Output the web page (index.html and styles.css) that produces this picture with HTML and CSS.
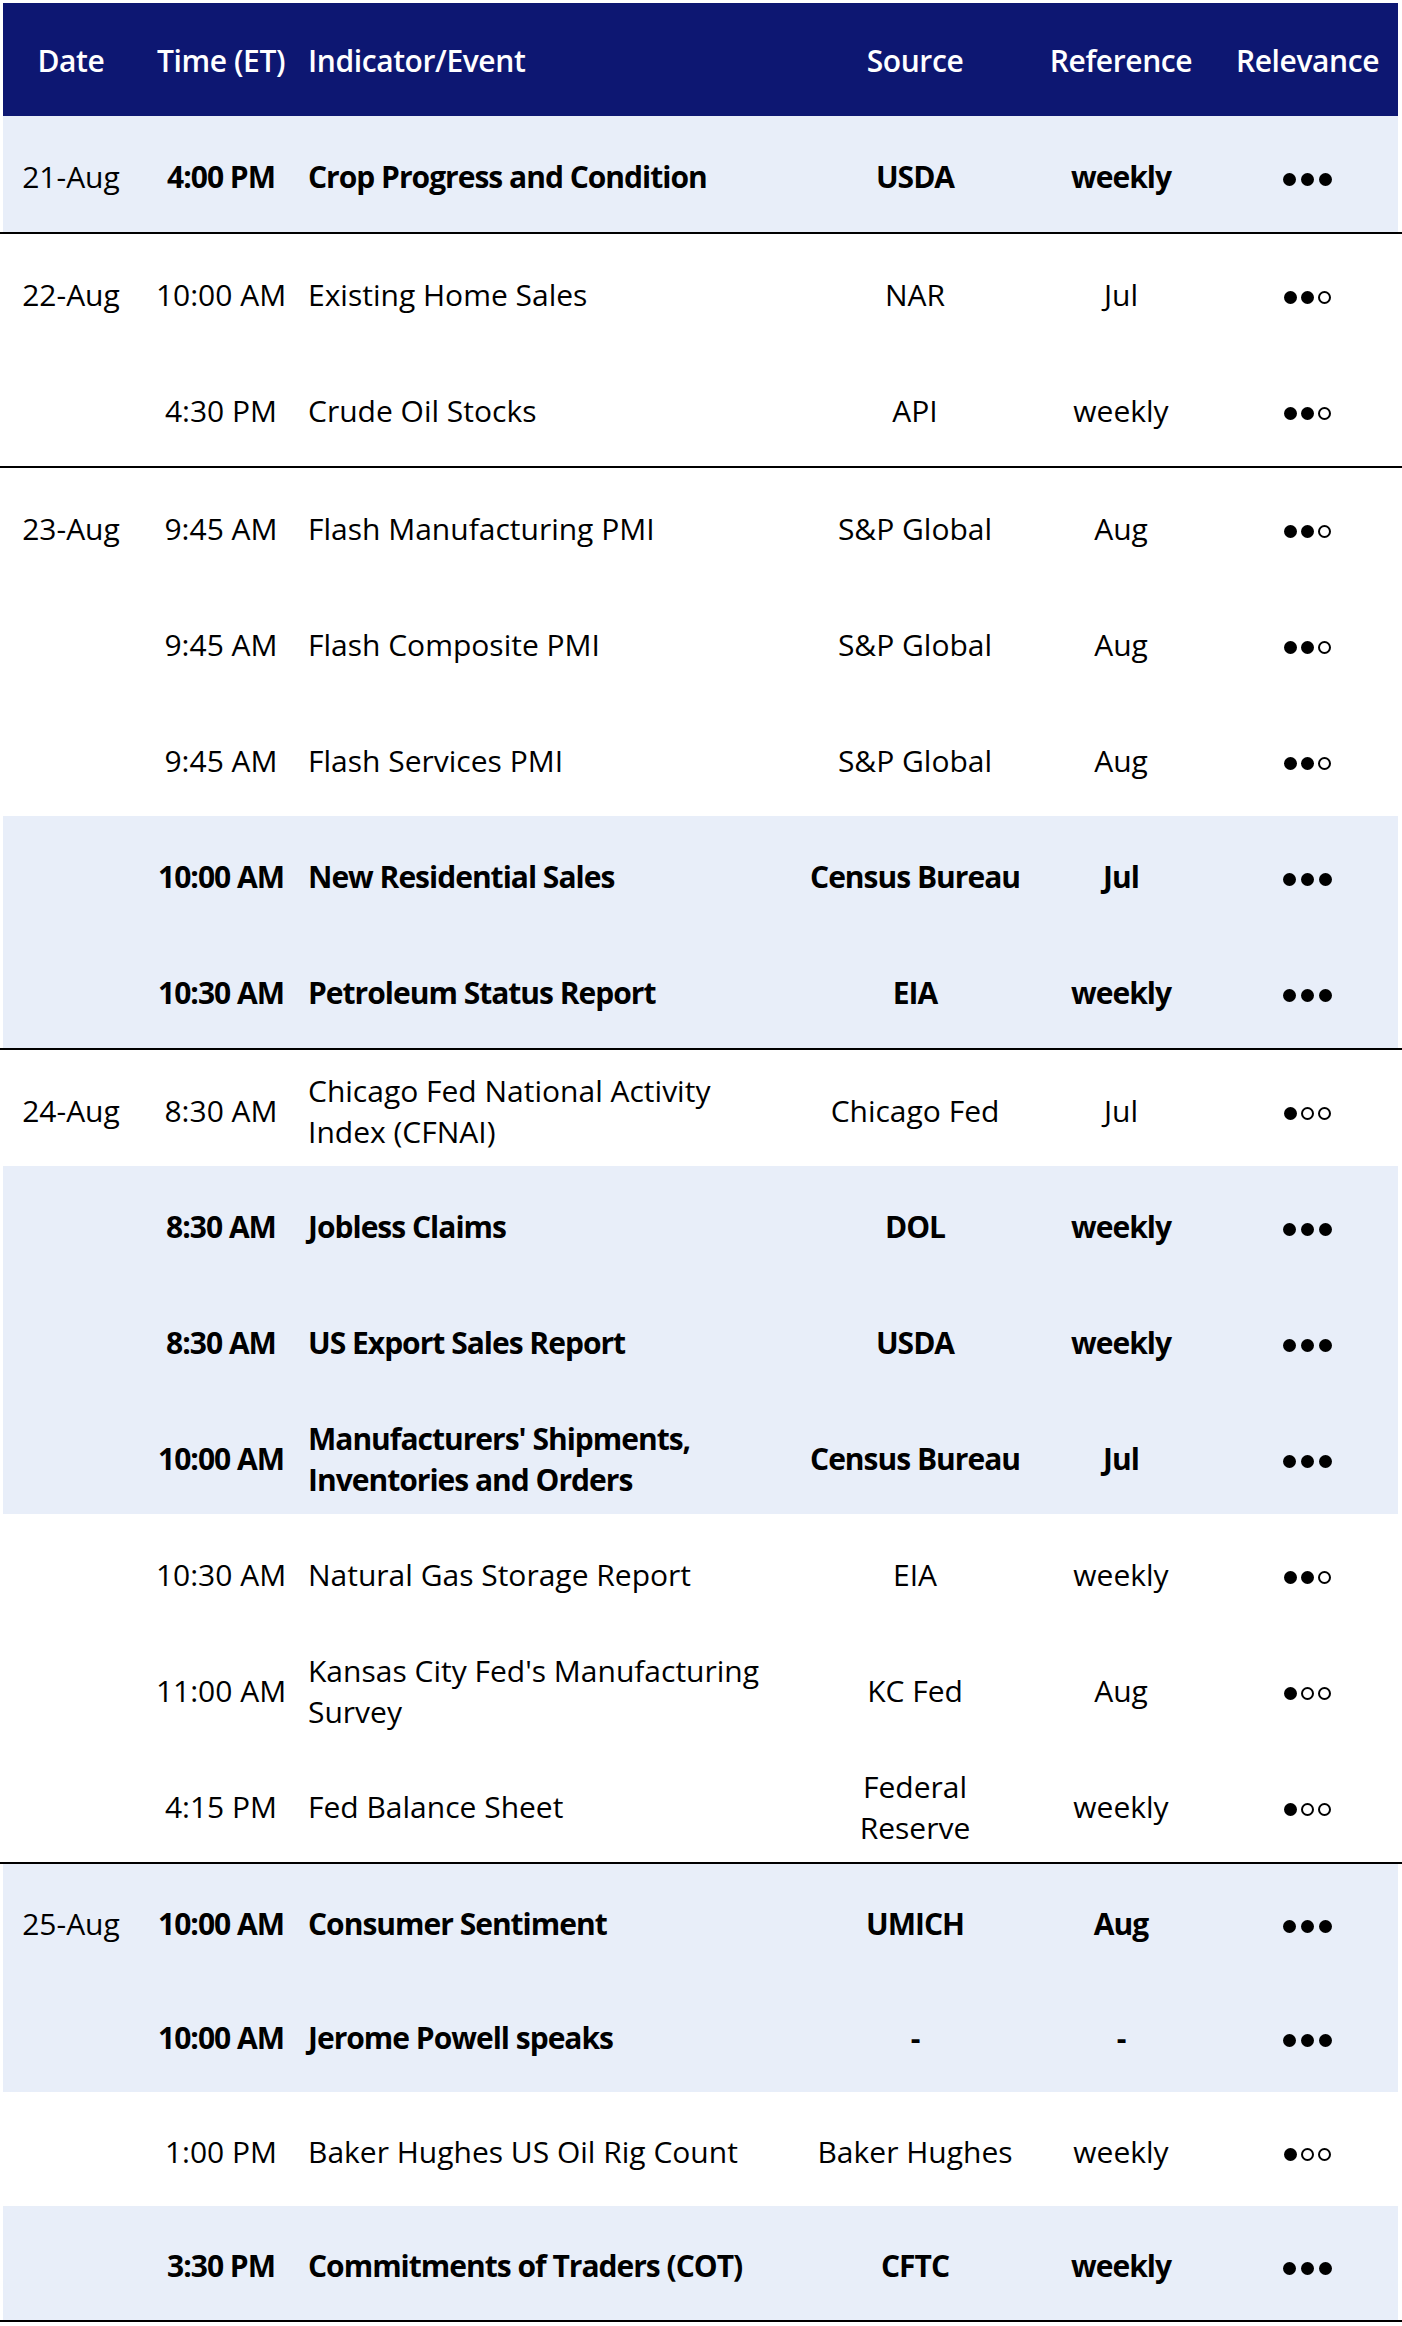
FILE: index.html
```html
<!DOCTYPE html>
<html lang="en">
<head>
<meta charset="utf-8">
<title>Economic Calendar</title>
<link rel="stylesheet" href="styles.css">
</head>
<body>
<div class="table">
  <div class="row head">
    <div class="cell">Date</div>
    <div class="cell">Time (ET)</div>
    <div class="cell ind">Indicator/Event</div>
    <div class="cell">Source</div>
    <div class="cell">Reference</div>
    <div class="cell">Relevance</div>
  </div>

  <div class="group">
    <div class="row shade strong">
      <div class="cell date">21-Aug</div>
      <div class="cell">4:00 PM</div>
      <div class="cell ind">Crop Progress and Condition</div>
      <div class="cell">USDA</div>
      <div class="cell">weekly</div>
      <div class="cell"><span class="dots"><i class="dot"></i><i class="dot"></i><i class="dot"></i></span></div>
    </div>
  </div>

  <div class="group">
    <div class="row">
      <div class="cell date">22-Aug</div>
      <div class="cell">10:00 AM</div>
      <div class="cell ind">Existing Home Sales</div>
      <div class="cell">NAR</div>
      <div class="cell">Jul</div>
      <div class="cell"><span class="dots"><i class="dot"></i><i class="dot"></i><i class="dot o"></i></span></div>
    </div>
    <div class="row">
      <div class="cell date"></div>
      <div class="cell">4:30 PM</div>
      <div class="cell ind">Crude Oil Stocks</div>
      <div class="cell">API</div>
      <div class="cell">weekly</div>
      <div class="cell"><span class="dots"><i class="dot"></i><i class="dot"></i><i class="dot o"></i></span></div>
    </div>
  </div>

  <div class="group">
    <div class="row">
      <div class="cell date">23-Aug</div>
      <div class="cell">9:45 AM</div>
      <div class="cell ind">Flash Manufacturing PMI</div>
      <div class="cell">S&amp;P Global</div>
      <div class="cell">Aug</div>
      <div class="cell"><span class="dots"><i class="dot"></i><i class="dot"></i><i class="dot o"></i></span></div>
    </div>
    <div class="row">
      <div class="cell date"></div>
      <div class="cell">9:45 AM</div>
      <div class="cell ind">Flash Composite PMI</div>
      <div class="cell">S&amp;P Global</div>
      <div class="cell">Aug</div>
      <div class="cell"><span class="dots"><i class="dot"></i><i class="dot"></i><i class="dot o"></i></span></div>
    </div>
    <div class="row">
      <div class="cell date"></div>
      <div class="cell">9:45 AM</div>
      <div class="cell ind">Flash Services PMI</div>
      <div class="cell">S&amp;P Global</div>
      <div class="cell">Aug</div>
      <div class="cell"><span class="dots"><i class="dot"></i><i class="dot"></i><i class="dot o"></i></span></div>
    </div>
    <div class="row shade strong">
      <div class="cell date"></div>
      <div class="cell">10:00 AM</div>
      <div class="cell ind">New Residential Sales</div>
      <div class="cell">Census Bureau</div>
      <div class="cell">Jul</div>
      <div class="cell"><span class="dots"><i class="dot"></i><i class="dot"></i><i class="dot"></i></span></div>
    </div>
    <div class="row shade strong">
      <div class="cell date"></div>
      <div class="cell">10:30 AM</div>
      <div class="cell ind">Petroleum Status Report</div>
      <div class="cell">EIA</div>
      <div class="cell">weekly</div>
      <div class="cell"><span class="dots"><i class="dot"></i><i class="dot"></i><i class="dot"></i></span></div>
    </div>
  </div>

  <div class="group">
    <div class="row">
      <div class="cell date">24-Aug</div>
      <div class="cell">8:30 AM</div>
      <div class="cell ind">Chicago Fed National Activity<br>Index (CFNAI)</div>
      <div class="cell">Chicago Fed</div>
      <div class="cell">Jul</div>
      <div class="cell"><span class="dots"><i class="dot"></i><i class="dot o"></i><i class="dot o"></i></span></div>
    </div>
    <div class="row shade strong">
      <div class="cell date"></div>
      <div class="cell">8:30 AM</div>
      <div class="cell ind">Jobless Claims</div>
      <div class="cell">DOL</div>
      <div class="cell">weekly</div>
      <div class="cell"><span class="dots"><i class="dot"></i><i class="dot"></i><i class="dot"></i></span></div>
    </div>
    <div class="row shade strong">
      <div class="cell date"></div>
      <div class="cell">8:30 AM</div>
      <div class="cell ind">US Export Sales Report</div>
      <div class="cell">USDA</div>
      <div class="cell">weekly</div>
      <div class="cell"><span class="dots"><i class="dot"></i><i class="dot"></i><i class="dot"></i></span></div>
    </div>
    <div class="row shade strong">
      <div class="cell date"></div>
      <div class="cell">10:00 AM</div>
      <div class="cell ind">Manufacturers' Shipments,<br>Inventories and Orders</div>
      <div class="cell">Census Bureau</div>
      <div class="cell">Jul</div>
      <div class="cell"><span class="dots"><i class="dot"></i><i class="dot"></i><i class="dot"></i></span></div>
    </div>
    <div class="row">
      <div class="cell date"></div>
      <div class="cell">10:30 AM</div>
      <div class="cell ind">Natural Gas Storage Report</div>
      <div class="cell">EIA</div>
      <div class="cell">weekly</div>
      <div class="cell"><span class="dots"><i class="dot"></i><i class="dot"></i><i class="dot o"></i></span></div>
    </div>
    <div class="row">
      <div class="cell date"></div>
      <div class="cell">11:00 AM</div>
      <div class="cell ind">Kansas City Fed's Manufacturing<br>Survey</div>
      <div class="cell">KC Fed</div>
      <div class="cell">Aug</div>
      <div class="cell"><span class="dots"><i class="dot"></i><i class="dot o"></i><i class="dot o"></i></span></div>
    </div>
    <div class="row">
      <div class="cell date"></div>
      <div class="cell">4:15 PM</div>
      <div class="cell ind">Fed Balance Sheet</div>
      <div class="cell">Federal<br>Reserve</div>
      <div class="cell">weekly</div>
      <div class="cell"><span class="dots"><i class="dot"></i><i class="dot o"></i><i class="dot o"></i></span></div>
    </div>
  </div>

  <div class="group last">
    <div class="row shade strong">
      <div class="cell date">25-Aug</div>
      <div class="cell">10:00 AM</div>
      <div class="cell ind">Consumer Sentiment</div>
      <div class="cell">UMICH</div>
      <div class="cell">Aug</div>
      <div class="cell"><span class="dots"><i class="dot"></i><i class="dot"></i><i class="dot"></i></span></div>
    </div>
    <div class="row shade strong">
      <div class="cell date"></div>
      <div class="cell">10:00 AM</div>
      <div class="cell ind">Jerome Powell speaks</div>
      <div class="cell">-</div>
      <div class="cell">-</div>
      <div class="cell"><span class="dots"><i class="dot"></i><i class="dot"></i><i class="dot"></i></span></div>
    </div>
    <div class="row">
      <div class="cell date"></div>
      <div class="cell">1:00 PM</div>
      <div class="cell ind">Baker Hughes US Oil Rig Count</div>
      <div class="cell">Baker Hughes</div>
      <div class="cell">weekly</div>
      <div class="cell"><span class="dots"><i class="dot"></i><i class="dot o"></i><i class="dot o"></i></span></div>
    </div>
    <div class="row shade strong">
      <div class="cell date"></div>
      <div class="cell">3:30 PM</div>
      <div class="cell ind">Commitments of Traders (COT)</div>
      <div class="cell">CFTC</div>
      <div class="cell">weekly</div>
      <div class="cell"><span class="dots"><i class="dot"></i><i class="dot"></i><i class="dot"></i></span></div>
    </div>
  </div>
</div>
</body>
</html>
```

FILE: styles.css
```css
html, body {
  margin: 0;
  padding: 0;
  background: #ffffff;
}

body {
  padding-top: 3px;
  font-family: "Open Sans", "Noto Sans", sans-serif;
  font-size: 30px;
  color: #000000;
}

.table {
  width: 1402px;
}

.row {
  display: grid;
  grid-template-columns: 136px 164px 502px 220px 192px 181px;
  height: 116px;
  margin: 0 4px 0 3px;
}

.head {
  height: 113px;
  background: #0d1772;
  color: #ffffff;
  font-weight: 600;
  letter-spacing: -0.4px;
}

.head .cell {
  padding-top: 2px;
}

.group {
  border-bottom: 2px solid #000000;
}

.group.last .row {
  height: 114px;
}

.cell {
  display: flex;
  align-items: center;
  justify-content: center;
  text-align: center;
  line-height: 41px;
  padding-top: 5px;
  box-sizing: border-box;
  white-space: nowrap;
}

.cell.ind {
  justify-content: flex-start;
  text-align: left;
  padding-left: 5px;
}

.shade {
  background: #e8eef9;
}

.strong .cell {
  font-weight: 700;
  letter-spacing: -1px;
}

.strong .cell.date {
  font-weight: 400;
  letter-spacing: 0;
}

.dots {
  display: flex;
  gap: 4px;
  margin-top: 5px;
}

.dot {
  display: block;
  width: 13px;
  height: 13px;
  border-radius: 50%;
  background: #000000;
  box-sizing: border-box;
}

.dot.o {
  background: transparent;
  border: 2px solid #000000;
}

.strong .dots {
  gap: 5px;
}

.strong .dot {
  width: 13px;
  height: 13px;
}
```
